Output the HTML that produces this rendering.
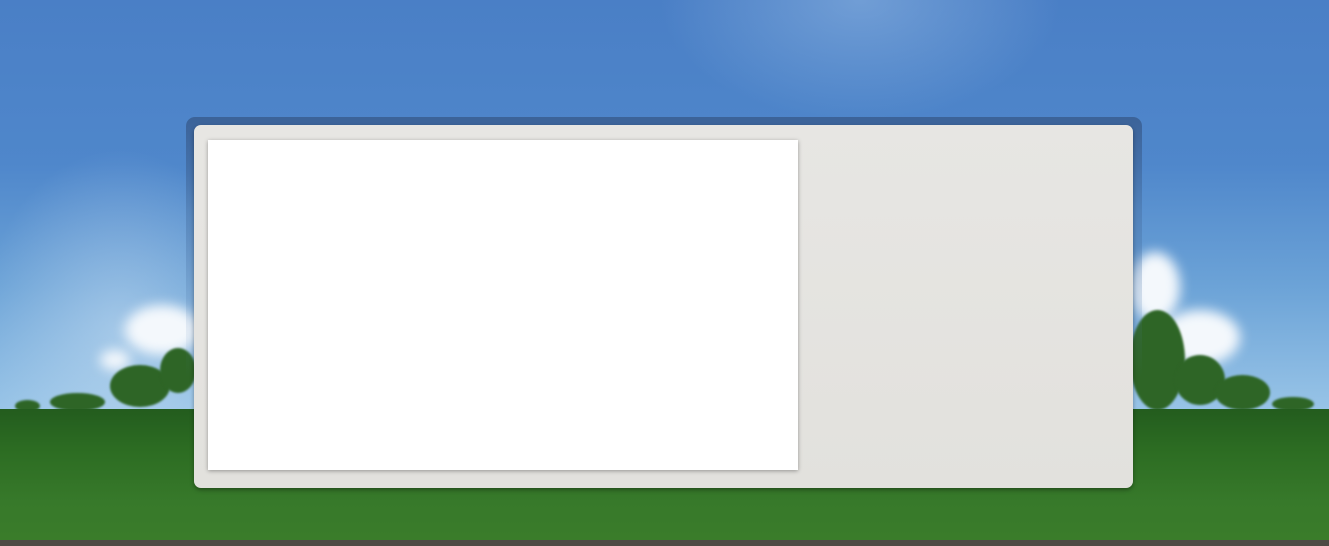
<!DOCTYPE html>
<html><head><meta charset="utf-8"><style>
html,body{margin:0;padding:0;width:1329px;height:546px;overflow:hidden}
body{position:relative;background:#4b80c7}
.sky{position:absolute;left:0;top:0;width:1329px;height:410px;background:
radial-gradient(ellipse 200px 120px at 860px 0px,rgba(160,195,232,.45),transparent),
radial-gradient(ellipse 140px 180px at 120px 330px,rgba(215,232,246,.45),transparent),
linear-gradient(180deg,#4a7fc6 0%,#4f87cb 40%,#6ca3d7 70%,#98c4e7 100%)}
.cloud{position:absolute;border-radius:50%;background:#f4f8fc;filter:blur(6px)}
.tree{position:absolute;border-radius:50%;background:#2e6526;filter:blur(1px)}
.grass{position:absolute;left:0;top:409px;width:1329px;height:132px;background:
linear-gradient(180deg,#235c1e 0%,#2c6c22 30%,#37792a 70%,#3a7c2a 100%)}
.dirt{position:absolute;left:0;top:540px;width:1329px;height:6px;background:#4e4a44}
.frame{position:absolute;left:186px;top:117px;width:956px;height:373px;border-radius:9px;
background:linear-gradient(180deg,rgba(55,90,140,.8) 0%,rgba(70,110,160,.45) 25%,rgba(80,120,170,.12) 55%,rgba(80,120,170,0) 70%)}
.panel{position:absolute;left:194px;top:125px;width:939px;height:363px;border-radius:7px;
background:linear-gradient(180deg,#e7e6e3,#e2e1dd);box-shadow:0 2px 4px rgba(0,0,0,.35)}
.white{position:absolute;left:208px;top:140px;width:590px;height:330px;background:#fff;box-shadow:0 1px 4px rgba(0,0,0,.35)}
</style></head><body>
<div class="sky"></div>
<div class="cloud" style="left:125px;top:305px;width:75px;height:50px"></div>
<div class="cloud" style="left:100px;top:350px;width:30px;height:20px"></div>
<div class="cloud" style="left:1130px;top:252px;width:50px;height:70px"></div>
<div class="cloud" style="left:1160px;top:310px;width:80px;height:55px"></div>
<div class="tree" style="left:110px;top:365px;width:60px;height:42px"></div>
<div class="tree" style="left:160px;top:348px;width:36px;height:45px"></div>
<div class="tree" style="left:50px;top:393px;width:55px;height:18px"></div>
<div class="tree" style="left:15px;top:400px;width:25px;height:12px"></div>
<div class="tree" style="left:1130px;top:310px;width:55px;height:100px"></div>
<div class="tree" style="left:1175px;top:355px;width:50px;height:50px"></div>
<div class="tree" style="left:1215px;top:375px;width:55px;height:35px"></div>
<div class="tree" style="left:1272px;top:397px;width:42px;height:14px"></div>
<div class="grass"></div>
<div class="dirt"></div>
<div class="frame"></div>
<div class="panel"></div>
<div class="white"></div>
</body></html>
